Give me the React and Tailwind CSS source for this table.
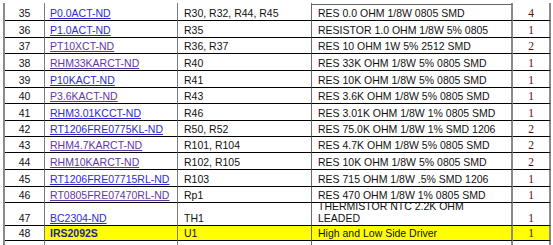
import React from "react";

const rows = [
  { n: "35", part: "P0.0ACT-ND", ref: "R30, R32, R44, R45", desc: "RES 0.0 OHM 1/8W 0805 SMD", qty: "4", h: "h-[17px]" },
  { n: "36", part: "P1.0ACT-ND", ref: "R35", desc: "RESISTOR 1.0 OHM 1/8W 5% 0805", qty: "1", h: "h-[17px]" },
  { n: "37", part: "PT10XCT-ND", ref: "R36, R37", desc: "RES 10 OHM 1W 5% 2512 SMD", qty: "2", h: "h-[16px]", visited: true },
  { n: "38", part: "RHM33KARCT-ND", ref: "R40", desc: "RES 33K OHM 1/8W 5% 0805 SMD", qty: "1", h: "h-[17px]", visited: true },
  { n: "39", part: "P10KACT-ND", ref: "R41", desc: "RES 10K OHM 1/8W 5% 0805 SMD", qty: "1", h: "h-[17px]" },
  { n: "40", part: "P3.6KACT-ND", ref: "R43", desc: "RES 3.6K OHM 1/8W 5% 0805 SMD", qty: "1", h: "h-[16px]", visited: true },
  { n: "41", part: "RHM3.01KCCT-ND", ref: "R46", desc: "RES 3.01K OHM 1/8W 1% 0805 SMD", qty: "1", h: "h-[17px]" },
  { n: "42", part: "RT1206FRE0775KL-ND", ref: "R50, R52", desc: "RES 75.0K OHM 1/8W 1% SMD 1206", qty: "2", h: "h-[16px]" },
  { n: "43", part: "RHM4.7KARCT-ND", ref: "R101, R104", desc: "RES 4.7K OHM 1/8W 5% 0805 SMD", qty: "2", h: "h-[16px]", visited: true },
  { n: "44", part: "RHM10KARCT-ND", ref: "R102, R105", desc: "RES 10K OHM 1/8W 5% 0805 SMD", qty: "2", h: "h-[17px]", visited: true },
  { n: "45", part: "RT1206FRE07715RL-ND", ref: "R103", desc: "RES 715 OHM 1/8W .5% SMD 1206", qty: "1", h: "h-[17px]" },
  { n: "46", part: "RT0805FRE07470RL-ND", ref: "Rp1", desc: "RES 470 OHM 1/8W 1% 0805 SMD", qty: "1", h: "h-[16px]", visited: true },
  { n: "47", part: "BC2304-ND", ref: "TH1", desc: ["THERMISTOR NTC 2.2K OHM", "LEADED"], qty: "1", h: "h-[23px]" },
];

const cell = "flex items-end leading-[12px] border-b border-black pb-px";

const Row = ({ r }) => (
  <div className={`flex ${r.h}`}>
    <div className={`${cell} w-[40px] justify-center border-r border-r-[#7a7a7a]`}>{r.n}</div>
    <div className={`${cell} w-[133px] pl-[5px] border-r border-r-[#7a7a7a]`}>
      <span className={`underline underline-offset-[1px] ${r.visited ? "text-[#6236a8]" : "text-[#2b2bd8]"}`}>
        {r.part}
      </span>
    </div>
    <div className={`${cell} w-[134px] pl-[6px] border-r border-r-[#6a6a6a]`}>{r.ref}</div>
    <div
      className={`${cell} w-[201px] pl-[6px] border-r-2 border-r-[#8a8a8a] ${r.n === "35" ? "border-t border-t-[#666]" : ""}`}
    >
      {Array.isArray(r.desc) ? (
        <span>
          {r.desc[0]}
          <br />
          {r.desc[1]}
        </span>
      ) : (
        <span>{r.desc}</span>
      )}
    </div>
    <div className={`${cell} w-[38px] justify-center border-r-2 border-r-[#8a8a8a] font-['Liberation_Serif',serif] text-[11.5px] text-[#5a0c0c]`}>
      {r.qty}
    </div>
  </div>
);

const Spacer = ({ h }) => (
  <div className={`flex ${h}`}>
    <div className="w-[40px] border-r border-r-[#7a7a7a]" />
    <div className="w-[133px] border-r border-r-[#7a7a7a]" />
    <div className="w-[134px] border-r border-r-[#6a6a6a]" />
    <div className="w-[201px] border-r-2 border-r-[#8a8a8a]" />
    <div className="w-[38px] border-r-2 border-r-[#8a8a8a]" />
  </div>
);

export default function App() {
  return (
    <div className="w-[553px] h-[245px] bg-white pt-[3px] pl-[3px] overflow-hidden font-['Liberation_Sans',Arial,sans-serif] text-[10.5px] text-[#111]">
      <div className="w-[548px] border-l-2 border-l-[#8a8a8a]">
        <Spacer h="h-[1px]" />
        {rows.map((r) => (
          <Row key={r.n} r={r} />
        ))}
        <div className="flex h-[15px]">
          <div className={`${cell} w-[40px] justify-center border-r border-r-[#7a7a7a]`}>48</div>
          <div className={`${cell} w-[133px] pl-[5px] border-r border-r-[#7a7a7a] bg-[#ffff00] font-bold text-[#1d1d9c]`}>
            IRS2092S
          </div>
          <div className={`${cell} w-[134px] pl-[6px] border-r border-r-[#6a6a6a] bg-[#ffff00]`}>U1</div>
          <div className={`${cell} w-[201px] pl-[6px] border-r-2 border-r-[#8a8a8a] bg-[#ffff00]`}>
            High and Low Side Driver
          </div>
          <div className={`${cell} w-[38px] justify-center border-r-2 border-r-[#8a8a8a] bg-[#ffff00] font-['Liberation_Serif',serif] text-[11.5px] text-[#5a0c0c]`}>
            1
          </div>
        </div>
        <Spacer h="h-[6px]" />
      </div>
    </div>
  );
}
